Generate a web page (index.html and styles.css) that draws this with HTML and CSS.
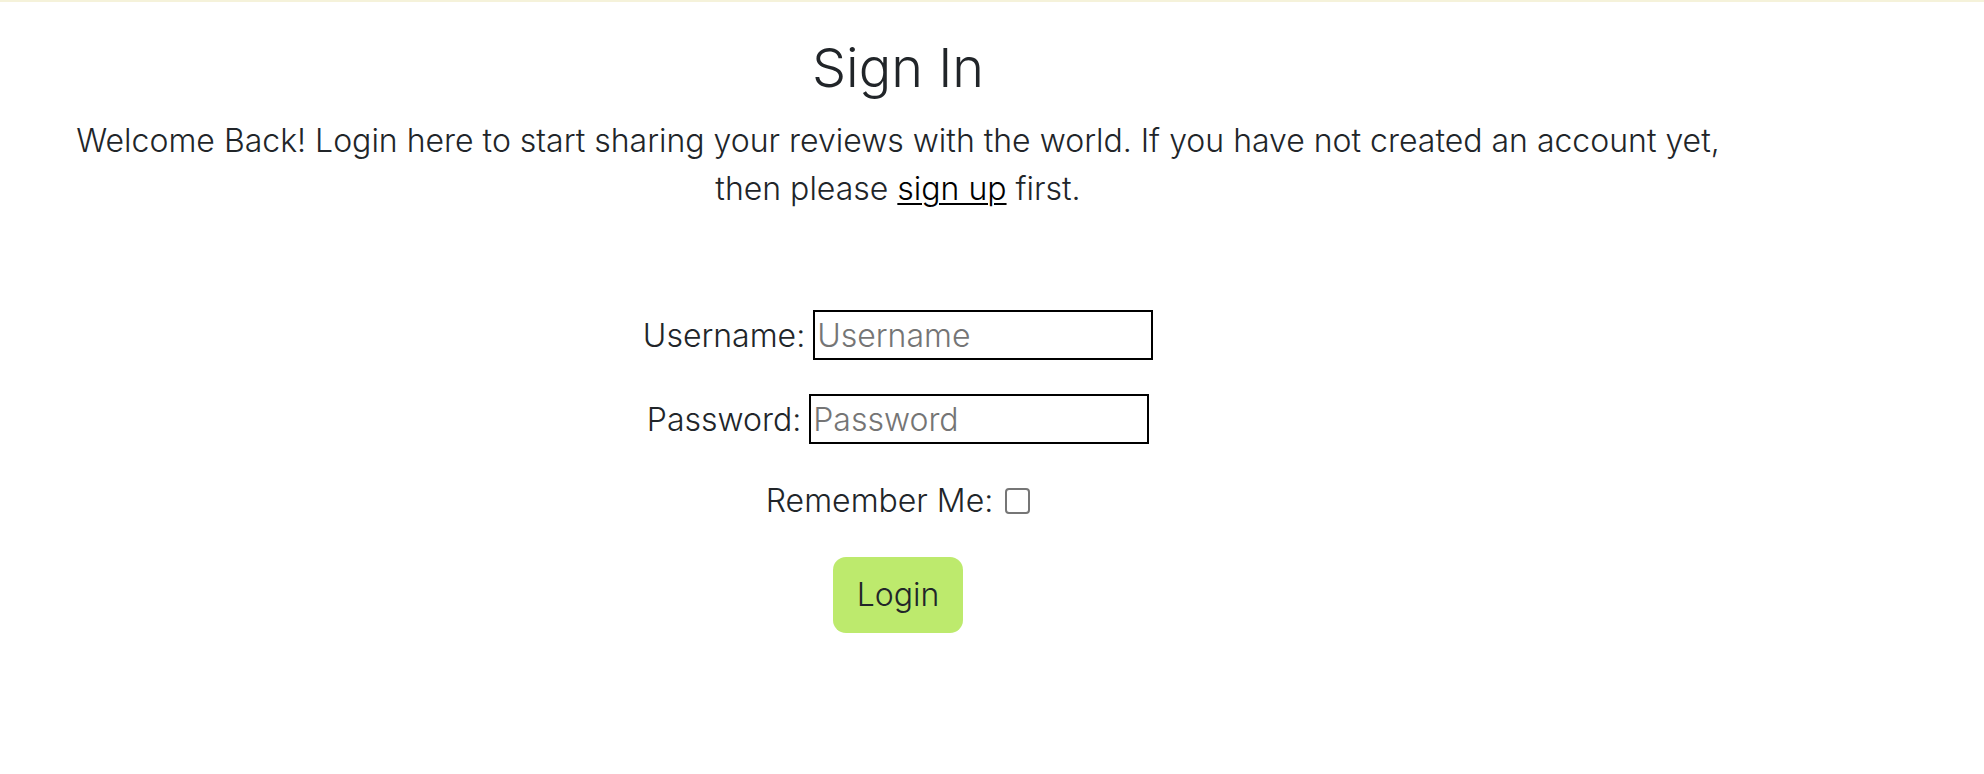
FILE: index.html
```html
<!DOCTYPE html>
<html lang="en">
<head>
<meta charset="utf-8">
<title>Sign In</title>
<link rel="stylesheet" href="styles.css">
</head>
<body>
<div class="top-bar"></div>
<main class="page">
  <h1 class="title">Sign In</h1>
  <p class="intro">Welcome Back! Login here to start sharing your reviews with the world. If you have not created an account yet, then please <a class="intro-link" href="#">sign up</a> first.</p>
  <form class="login-form">
    <div class="form-row">
      <label class="form-label" for="id_login">Username:</label>
      <input class="form-input" type="text" id="id_login" placeholder="Username">
    </div>
    <div class="form-row">
      <label class="form-label" for="id_password">Password:</label>
      <input class="form-input" type="password" id="id_password" placeholder="Password">
    </div>
    <div class="form-row form-row-check">
      <label class="form-label" for="id_remember">Remember Me:</label>
      <input class="form-check" type="checkbox" id="id_remember">
    </div>
    <div class="form-actions">
      <button class="btn-login" type="submit">Login</button>
    </div>
  </form>
</main>
</body>
</html>
```
FILE: styles.css
```css
* {
  box-sizing: border-box;
}

body {
  margin: 0;
  background: #ffffff;
  color: #212529;
  font-family: "Inter", "Open Sans", sans-serif;
  font-weight: 300;
  font-size: 32px;
  line-height: 48px;
}

.top-bar {
  height: 2px;
  background: #f5f2da;
}

.page {
  width: 1796px;
  text-align: center;
}

.title {
  margin: 34px 0 0;
  font-size: 54px;
  font-weight: 300;
  line-height: 64px;
}

.intro {
  max-width: 1680px;
  margin: 17px auto 0;
}

.intro-link {
  color: #000000;
  text-decoration: underline;
  text-decoration-thickness: 2px;
  text-underline-offset: 3px;
}

.login-form {
  margin-top: 97px;
  display: flex;
  flex-direction: column;
  align-items: center;
}

.form-row {
  display: flex;
  align-items: baseline;
  justify-content: center;
  gap: 8px;
  margin-bottom: 34px;
}

.form-label {
  line-height: 48px;
}

.form-input {
  width: 340px;
  height: 50px;
  margin: 0;
  padding: 1px 2px;
  border: 2px solid #000000;
  border-radius: 0;
  font-family: inherit;
  font-size: 32px;
  font-weight: 300;
  color: #212529;
  background: #ffffff;
}

.form-input::placeholder {
  color: #757575;
}

.form-row-check {
  align-items: flex-end;
  gap: 12px;
  margin-top: -1px;
  margin-bottom: 32px;
}

.form-check {
  appearance: none;
  -webkit-appearance: none;
  display: block;
  flex: 0 0 25px;
  width: 25px;
  min-width: 25px;
  height: 26px;
  min-height: 26px;
  margin: 0 0 11px;
  border: 2px solid #767676;
  border-radius: 4px;
  background: #ffffff;
}

.form-actions {
  display: flex;
  justify-content: center;
}

.btn-login {
  height: 76px;
  padding: 0 24px;
  border: none;
  border-radius: 13px;
  background: #bdea6d;
  color: #212529;
  font-family: inherit;
  font-size: 32px;
  font-weight: 300;
  line-height: 76px;
}
```
